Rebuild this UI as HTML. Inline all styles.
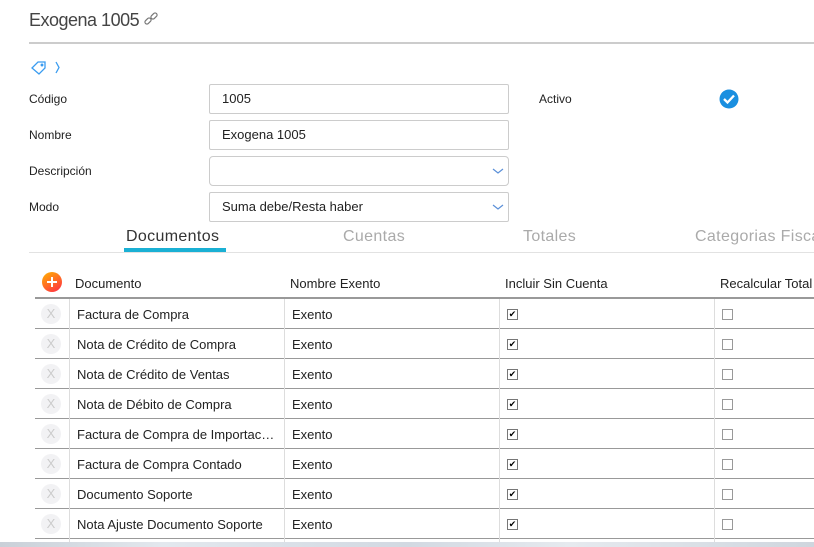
<!DOCTYPE html>
<html><head><meta charset="utf-8"><style>
html,body{margin:0;width:814px;height:547px;overflow:hidden}
body{background:#fff;font-family:"Liberation Sans",sans-serif;color:#222;position:relative}
.a{position:absolute}
.lbl{font-size:12px;color:#222}
.inp{position:absolute;left:209px;width:298px;height:28px;border:1px solid #ccc;border-radius:2px;font-size:13px;line-height:28px;text-indent:12px;box-sizing:content-box}
.tab{position:absolute;top:228px;font-size:16px;color:#aaa;letter-spacing:0.35px;white-space:nowrap}
.row{position:absolute;left:35px;width:779px;height:29px;border-bottom:1px solid #999}
.c{position:absolute;top:1px;height:30px;line-height:30px;font-size:13px;color:#222;white-space:nowrap}
.sep{position:absolute;top:0;width:1px;height:30px;background:#ddd}
.x{position:absolute;left:6px;top:5px;width:20px;height:20px;border-radius:50%;background:#f2f2f4;color:#ccc;font-size:13px;text-align:center;line-height:20px}
.cb{position:absolute;top:10px;width:9px;height:9px;border:1px solid #777;font-size:9px;line-height:9px;text-align:center;color:#000}
.cb.e{border-color:#999}
</style></head><body>
<div class="a" style="left:29px;top:10px;font-size:18px;color:#444;letter-spacing:-0.5px;white-space:nowrap">Exogena 1005</div>
<svg class="a" style="left:143px;top:11px" width="16" height="16" viewBox="0 0 16 16" fill="none" stroke="#777" stroke-width="1.2"><rect x="1.5" y="8" width="7" height="4" rx="2" transform="rotate(-45 5 10)"/><rect x="7.5" y="3" width="7" height="4" rx="2" transform="rotate(-45 11 5)"/></svg>
<div class="a" style="left:29px;top:42px;width:785px;height:2px;background:#ccc"></div>
<svg class="a" style="left:30px;top:60px" width="34" height="15" viewBox="0 0 34 15" fill="none" stroke="#3a9cf0" stroke-width="1.3"><path d="M2 8 L8 2 L15 2 L15 8 L9 14 Z"/><circle cx="12" cy="5" r="0.8" fill="#3a9cf0"/><path d="M26 2 L29 7.5 L26 13"/></svg>
<div class="a lbl" style="left:29px;top:92px">Código</div>
<div class="a lbl" style="left:29px;top:128px">Nombre</div>
<div class="a lbl" style="left:29px;top:164px">Descripción</div>
<div class="a lbl" style="left:29px;top:200px">Modo</div>
<div class="inp" style="top:84px">1005</div>
<div class="inp" style="top:120px">Exogena 1005</div>
<div class="inp" style="top:156px;border-radius:4px"></div>
<div class="inp" style="top:192px">Suma debe/Resta haber</div>
<svg class="a" style="left:492px;top:167px" width="12" height="8"><path d="M1 2 L6 6 L11 2" fill="none" stroke="#5a8fd8" stroke-width="1.2"/></svg>
<svg class="a" style="left:492px;top:203px" width="12" height="8"><path d="M1 2 L6 6 L11 2" fill="none" stroke="#5a8fd8" stroke-width="1.2"/></svg>
<div class="a lbl" style="left:539px;top:92px">Activo</div>
<svg class="a" style="left:719px;top:89px" width="20" height="20"><circle cx="10" cy="10" r="9.5" fill="#1a8fe0"/><path d="M5 10 L8.5 13.5 L15 6.5" fill="none" stroke="#fff" stroke-width="2.3"/></svg>
<div class="tab" style="left:126px;color:#333">Documentos</div>
<div class="a" style="left:124px;top:248px;width:102px;height:4px;background:#1ab0d4"></div>
<div class="tab" style="left:343px">Cuentas</div>
<div class="tab" style="left:523px">Totales</div>
<div class="tab" style="left:695px">Categorias Fisca</div>
<div class="a" style="left:29px;top:252px;width:785px;height:1px;background:#e2e2e2"></div>
<svg class="a" style="left:42px;top:272px" width="20" height="20"><defs><linearGradient id="g" x1="0" y1="0" x2="0.6" y2="1"><stop offset="0" stop-color="#ffb300"/><stop offset="1" stop-color="#ff3d3d"/></linearGradient></defs><circle cx="10" cy="10" r="10" fill="url(#g)"/><path d="M10 5 V15 M5 10 H15" stroke="#fff" stroke-width="2"/></svg>
<div class="a" style="left:75px;top:276px;font-size:13px">Documento</div>
<div class="a" style="left:290px;top:276px;font-size:13px">Nombre Exento</div>
<div class="a" style="left:505px;top:276px;font-size:13px">Incluir Sin Cuenta</div>
<div class="a" style="left:720px;top:276px;font-size:13px">Recalcular Total</div>
<div class="a" style="left:35px;top:297px;width:779px;height:2px;background:#999"></div>
<div id="rows"></div>
<script>
var d=["Factura de Compra","Nota de Crédito de Compra","Nota de Crédito de Ventas","Nota de Débito de Compra","Factura de Compra de Importac…","Factura de Compra Contado","Documento Soporte","Nota Ajuste Documento Soporte"];
var h="";
for(var i=0;i<d.length;i++){var t=299+i*30;
h+='<div class="row" style="top:'+t+'px"><div class="x">X</div><div class="sep" style="left:34px"></div><div class="c" style="left:42px">'+d[i]+'</div><div class="sep" style="left:249px"></div><div class="c" style="left:257px">Exento</div><div class="sep" style="left:464px"></div><div class="cb" style="left:472px">✔</div><div class="sep" style="left:679px"></div><div class="cb e" style="left:687px"></div></div>';}
h+='<div class="row" style="top:539px;height:3px;border:none;overflow:hidden"><div class="sep" style="left:34px"></div><div class="sep" style="left:249px"></div><div class="sep" style="left:464px"></div><div class="sep" style="left:679px"></div></div>';
document.getElementById("rows").innerHTML=h;
</script>
<div class="a" style="left:0;top:542px;width:814px;height:5px;background:linear-gradient(90deg,#c9d0d8,#e3e8ee 20%,#d2d9e2 50%,#e6eaef 70%,#cfd6de)"></div>
</body></html>
